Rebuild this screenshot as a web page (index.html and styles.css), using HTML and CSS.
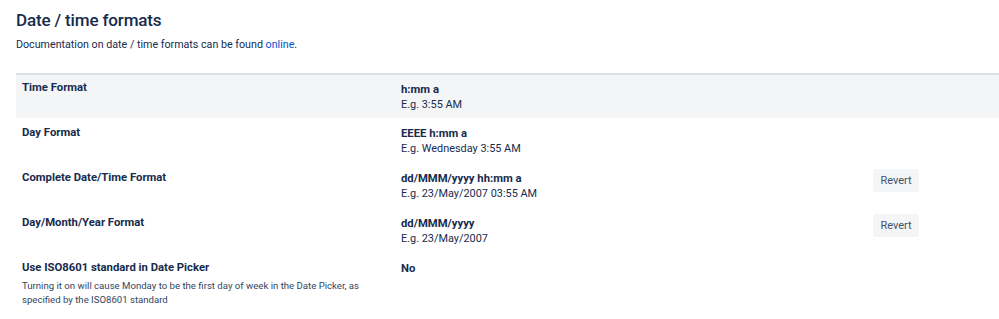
FILE: index.html
```html
<!DOCTYPE html>
<html>
	<head>
		<meta charset="utf-8" />
		<title>Date / time formats</title>
		<link rel="stylesheet" href="styles.css">
	</head>
	<body>
		<div class="wrap">
			<h2 class="title">Date / time formats</h2>
			<p class="intro">Documentation on date / time formats can be found <a href="#">online</a>.</p>

			<table class="formats">
				<colgroup>
					<col class="col-label">
					<col class="col-value">
					<col>
				</colgroup>
				<tr class="shaded">
					<td class="label">Time Format</td>
					<td class="value">
						<div class="pattern">h:mm a</div>
						<div class="example">E.g. 3:55 AM</div>
					</td>
					<td></td>
				</tr>
				<tr>
					<td class="label">Day Format</td>
					<td class="value">
						<div class="pattern">EEEE h:mm a</div>
						<div class="example">E.g. Wednesday 3:55 AM</div>
					</td>
					<td></td>
				</tr>
				<tr>
					<td class="label">Complete Date/Time Format</td>
					<td class="value">
						<div class="pattern">dd/MMM/yyyy hh:mm a</div>
						<div class="example">E.g. 23/May/2007 03:55 AM</div>
					</td>
					<td class="action"><button class="revert">Revert</button></td>
				</tr>
				<tr>
					<td class="label">Day/Month/Year Format</td>
					<td class="value">
						<div class="pattern">dd/MMM/yyyy</div>
						<div class="example">E.g. 23/May/2007</div>
					</td>
					<td class="action"><button class="revert">Revert</button></td>
				</tr>
				<tr>
					<td class="label">
						Use ISO8601 standard in Date Picker
						<div class="desc">Turning it on will cause Monday to be the first day of week in the Date Picker, as specified by the ISO8601 standard</div>
					</td>
					<td class="value">
						<div class="pattern">No</div>
					</td>
					<td></td>
				</tr>
			</table>
		</div>
	</body>
</html>
```

FILE: styles.css
```css
body {
	margin: 0;
	background-color: #fff;
	color: #172b4d;
	font-family: Roboto, "Noto Sans", sans-serif;
}
.wrap {
	padding-left: 16px;
}
.title {
	margin: 0;
	padding-top: 8px;
	font-size: 17px;
	line-height: 24px;
	font-weight: 500;
	letter-spacing: -0.15px;
}
.intro {
	margin: 5px 0 0;
	font-size: 10.7px;
	line-height: 16px;
}
.intro a {
	color: #0052cc;
	text-decoration: none;
}
.formats {
	margin-top: 20px;
	width: 100%;
	border-collapse: collapse;
	border-top: 2px solid #dfe1e6;
	font-size: 11.3px;
}
.col-label {
	width: 379px;
}
.col-value {
	width: 472px;
}
.formats tr {
	height: 45px;
}
.formats tr.shaded {
	height: 44px;
}
.formats td {
	padding: 0 6px;
	vertical-align: top;
}
.shaded {
	background-color: #f4f5f7;
}
.label {
	padding-top: 5px !important;
	font-weight: 700;
	line-height: 16px;
}
.formats tr + tr .label {
	padding-top: 7px !important;
}
.value {
	padding-top: 7px !important;
	line-height: 15px;
}
.formats tr + tr .value {
	padding-top: 8px !important;
}
.pattern {
	font-weight: 700;
}
.example {
	font-size: 10.9px;
}
.desc {
	margin-top: 3px;
	padding-bottom: 6px;
	color: #344563;
	font-weight: 400;
	font-size: 9.6px;
	line-height: 14px;
}
.action {
	padding-top: 6px !important;
}
.revert {
	display: block;
	width: 46px;
	height: 23px;
	padding: 0;
	border: none;
	border-radius: 3px;
	background-color: #f4f5f7;
	color: #42526e;
	font-family: inherit;
	font-size: 11px;
	cursor: pointer;
}
```
